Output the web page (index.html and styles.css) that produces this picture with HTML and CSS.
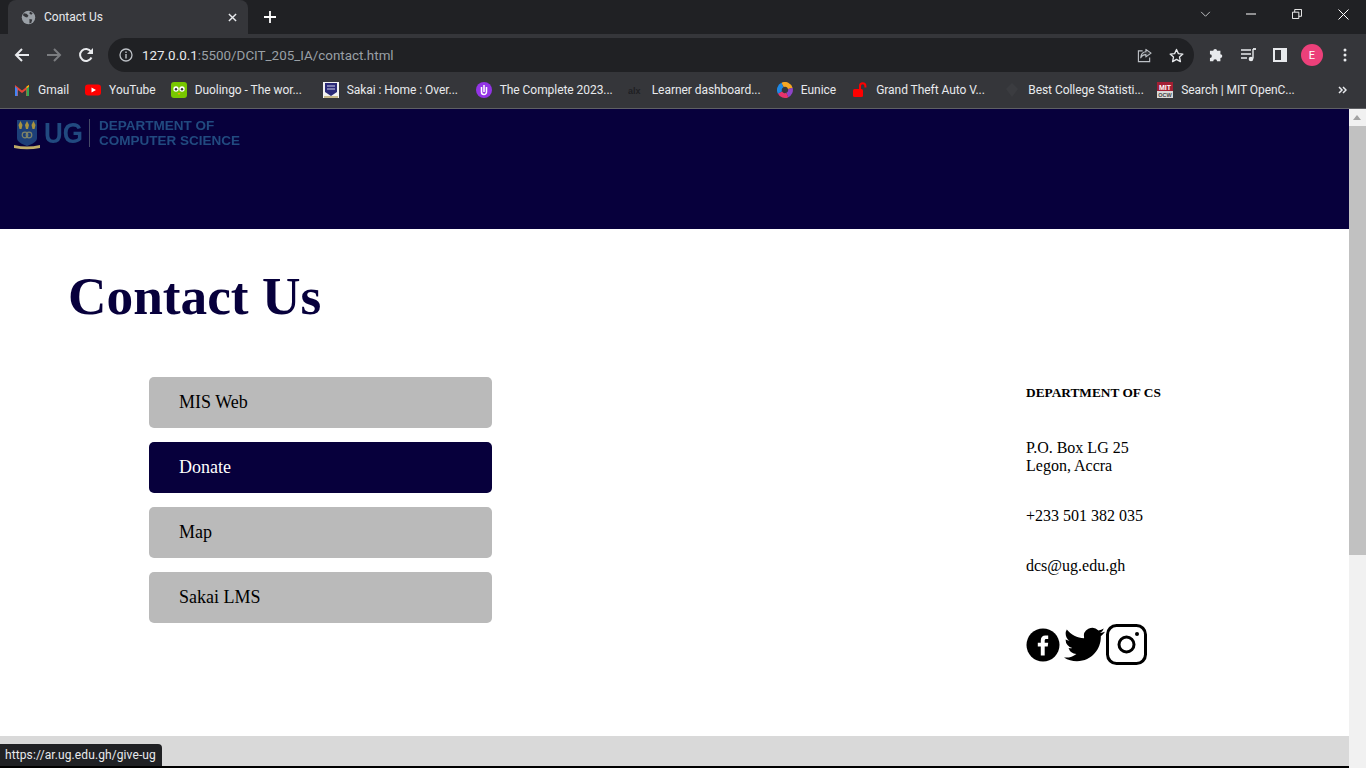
FILE: index.html
```html
<!DOCTYPE html>
<html lang="en">
<head>
    <meta charset="UTF-8">
    <title>Contact Us</title>
    <link rel="stylesheet" href="styles.css">
</head>
<body>
    <div class="browser">
        <div class="tabstrip">
            <div class="tab">
                <svg class="tab-globe" viewBox="0 0 16 16"><circle cx="8" cy="8" r="7.2" fill="#9aa0a6"/><path d="M3 3.500l3 .5 2 2-1.500 2-2-.5-2.500-2zM9 9.500l3 .5-1 3.500-2 1zM9.500 1.500l3 2-1.500 1.500-2-1z" fill="#35363a"/></svg>
                <span class="tab-title">Contact Us</span>
                <svg class="tab-close" viewBox="0 0 10 10"><path d="M1 1l8 8M9 1l-8 8" stroke="#e8eaed" stroke-width="1.600"/></svg>
            </div>
            <svg class="new-tab" viewBox="0 0 12 12"><path d="M6 0v12M0 6h12" stroke="#fff" stroke-width="1.800"/></svg>
            <div class="window-btns">
                <svg class="win-chevron" viewBox="0 0 12 8"><path d="M1 1l5 5 5-5" fill="none" stroke="#d0d3d6" stroke-width="1"/></svg>
                <svg class="win-min" viewBox="0 0 10 10"><path d="M0 5h10" stroke="#fff" stroke-width="1"/></svg>
                <svg class="win-max" viewBox="0 0 11 11"><path d="M.5 3.500h7v7h-7zM3 3.500V.5h7.500V8H7.500" fill="none" stroke="#fff" stroke-width="1"/></svg>
                <svg class="win-close" viewBox="0 0 11 11"><path d="M.5.5l10 10M10.500.5l-10 10" stroke="#fff" stroke-width="1"/></svg>
            </div>
        </div>

        <div class="toolbar">
            <svg class="nav-icon" viewBox="0 0 16 16"><path d="M15 8H2M8 2L2 8l6 6" fill="none" stroke="#e8eaed" stroke-width="2"/></svg>
            <svg class="nav-icon" viewBox="0 0 16 16"><path d="M1 8h13M8 2l6 6-6 6" fill="none" stroke="#7b7d80" stroke-width="2"/></svg>
            <svg class="nav-icon" viewBox="0 0 16 16"><path d="M13.500 10.500A6 6 0 1 1 13 4.500" fill="none" stroke="#e8eaed" stroke-width="2"/><path d="M15 1v6H9z" fill="#e8eaed"/></svg>
            <div class="omnibox">
                <svg class="info-icon" viewBox="0 0 14 14"><circle cx="7" cy="7" r="6" fill="none" stroke="#bdc1c6" stroke-width="1.300"/><path d="M7 6v4.500M7 3.500v1.500" stroke="#bdc1c6" stroke-width="1.400"/></svg>
                <span class="url"><b>127.0.0.1</b>:5500/DCIT_205_IA/contact.html</span>
                <svg class="omni-share" viewBox="0 0 16 16"><path d="M6 3H1.500v11.500h12V10" fill="none" stroke="#bdc1c6" stroke-width="1.200"/><path d="M9.500 1.500L15 5.500 9.500 9.500V7C7 7 5 8 4 10.500 4 6.500 6.500 4 9.500 4z" fill="#35363a" stroke="#bdc1c6" stroke-width="1.200" stroke-linejoin="round"/></svg>
                <svg class="omni-star" viewBox="0 0 16 16"><path d="M8 1.500l2 4.500 4.800.5-3.600 3.200 1 4.800L8 12.100 3.800 14.500l1-4.800L1.200 6.500 6 6z" fill="none" stroke="#e8eaed" stroke-width="1.400" stroke-linejoin="round"/></svg>
            </div>
            <div class="tool-icons">
                <svg class="tool-ext" viewBox="0 0 16 16"><path d="M1 5h3.500a2 2 0 1 1 4 0H12v3.500a2 2 0 1 1 0 4V16H8.500a2 2 0 1 0-4 0H1v-3.500a2 2 0 1 0 0-4z" fill="#e8eaed" transform="scale(.95) translate(0 -1)"/></svg>
                <svg class="tool-media" viewBox="0 0 16 14"><path d="M0 2h10M0 6h10M0 10h6" stroke="#e8eaed" stroke-width="1.400"/><path d="M12 1v9.500" stroke="#e8eaed" stroke-width="1.400"/><path d="M12 1h3" stroke="#e8eaed" stroke-width="1.800"/><circle cx="10" cy="11" r="2.300" fill="#e8eaed"/></svg>
                <svg class="tool-side" viewBox="0 0 14 14"><path d="M0 0h14v14H0z" fill="#e8eaed"/><path d="M2 2h6v10H2z" fill="#35363a"/></svg>
                <span class="avatar">E</span>
                <svg class="tool-menu" viewBox="0 0 4 14"><circle cx="2" cy="2" r="1.500" fill="#e8eaed"/><circle cx="2" cy="7" r="1.500" fill="#e8eaed"/><circle cx="2" cy="12" r="1.500" fill="#e8eaed"/></svg>
            </div>
        </div>

        <div class="bookmarks">
            <div class="bookmark">
                <svg viewBox="0 0 16 16"><path d="M1 14V3l7 5.500L15 3v11h-3V8L8 11 4 8v6z" fill="#ea4335"/><path d="M1 14V4.500L3.500 6.500V14z" fill="#4285f4"/><path d="M12.500 14V6.500L15 4.500V14z" fill="#34a853"/><path d="M12.500 6.500L15 4.500V3l-2.500 1.500z" fill="#fbbc04"/></svg>
                <span>Gmail</span>
            </div>
            <div class="bookmark">
                <svg viewBox="0 0 16 16"><rect y="2.500" width="16" height="11" rx="3" fill="#f00"/><path d="M6.500 5.500L11 8l-4.500 2.500z" fill="#fff"/></svg>
                <span>YouTube</span>
            </div>
            <div class="bookmark bm-pull">
                <svg viewBox="0 0 16 16"><rect width="16" height="16" rx="3" fill="#78c800"/><circle cx="5" cy="7" r="2.700" fill="#fff"/><circle cx="11" cy="7" r="2.700" fill="#fff"/><circle cx="5" cy="7.300" r="1.200" fill="#333"/><circle cx="11" cy="7.300" r="1.200" fill="#333"/><path d="M6.500 11h3l-1.500 2z" fill="#f5a800"/></svg>
                <span class="bm-long">Duolingo - The wor...</span>
            </div>
            <div class="bookmark">
                <svg viewBox="0 0 16 16"><rect width="16" height="16" fill="#f2f2f2"/><path d="M2 1h12v9l-6 4-6-4z" fill="#2b2a78"/><path d="M4 4h8M4 7h8" stroke="#cfcfe8" stroke-width="1.200"/><path d="M1 14h14v2H1z" fill="#c8b98a"/></svg>
                <span class="bm-long bm-113">Sakai : Home : Over...</span>
            </div>
            <div class="bookmark">
                <svg viewBox="0 0 16 16"><circle cx="8" cy="8" r="8" fill="#9334e6"/><path d="M5.500 5v5a2.500 2.500 0 0 0 5 0V5" fill="none" stroke="#fff" stroke-width="1.500"/><path d="M8 3v7" stroke="#fff" stroke-width="1.500"/></svg>
                <span class="bm-long">The Complete 2023...</span>
            </div>
            <div class="bookmark">
                <svg viewBox="0 0 16 16"><text class="alx" x="0" y="11.500">alx</text></svg>
                <span class="bm-long bm-109">Learner dashboard...</span>
            </div>
            <div class="bookmark">
                <svg viewBox="0 0 16 16"><g fill="none" stroke-width="4.800"><path d="M5.500 3a5.400 5.400 0 0 1 7.800 3.500" stroke="#f5a623"/><path d="M13.300 6.500a5.400 5.400 0 0 1-3 6.500" stroke="#8e44c8"/><path d="M10.300 13a5.400 5.400 0 0 1-7.300-2.500" stroke="#e8336d"/><path d="M3 10.500A5.400 5.400 0 0 1 5.500 3" stroke="#1e88e5"/></g></svg>
                <span>Eunice</span>
            </div>
            <div class="bookmark">
                <svg viewBox="0 0 16 16"><rect x="1" y="7" width="10" height="8" rx="1.500" fill="#f00"/><path d="M8 7V4a2.700 2.700 0 0 1 5.400 0v1.500" fill="none" stroke="#f00" stroke-width="2"/></svg>
                <span class="bm-long">Grand Theft Auto V...</span>
            </div>
            <div class="bookmark">
                <svg viewBox="0 0 16 16"><path d="M8 1l6 6-6 8-6-8z" fill="#3b3c40"/></svg>
                <span class="bm-long bm-113">Best College Statisti...</span>
            </div>
            <div class="bookmark">
                <svg viewBox="0 0 16 16"><rect width="16" height="9" fill="#a31f34"/><rect y="9" width="16" height="7" fill="#d9d9d9"/><text class="mit" x="8" y="7.500">MIT</text><text class="ocw" x="8" y="14.800">OCW</text></svg>
                <span class="bm-long">Search | MIT OpenC...</span>
            </div>
            <svg class="more" viewBox="0 0 9 8"><path d="M1 1l3 3-3 3M5 1l3 3-3 3" fill="none" stroke="#e8eaed" stroke-width="1.500"/></svg>
        </div>

        <div class="viewport">
            <div class="page">
                <header class="site-header">
                    <div class="logo">
                        <svg class="crest" viewBox="0 0 26 31"><path d="M3 1h20v18c0 4-5 6-10 8-5-2-10-4-10-8z" fill="#1c3f78"/><path d="M6.500 2l2 4-1 4h-2l-1-4zM13 2l2 4-1 4h-2l-1-4zM19.500 2l2 4-1 4h-2l-1-4z" fill="#a8933f"/><circle cx="11" cy="16" r="2.800" fill="none" stroke="#7f8468" stroke-width="1.200"/><circle cx="15" cy="16" r="2.800" fill="none" stroke="#7f8468" stroke-width="1.200"/><path d="M0 26q13 3 26 0v3q-13 2.500-26 0z" fill="#c0ad68"/></svg>
                        <span class="logo-ug">UG</span>
                        <span class="logo-bar"></span>
                        <span class="logo-dept">DEPARTMENT OF<br>COMPUTER SCIENCE</span>
                    </div>
                </header>
                <main class="contact">
                    <h1>Contact Us</h1>
                    <div class="contact-row">
                        <nav class="links">
                            <a href="#">MIS Web</a>
                            <a href="#" class="active">Donate</a>
                            <a href="#">Map</a>
                            <a href="#">Sakai LMS</a>
                        </nav>
                        <aside class="address">
                            <h4>DEPARTMENT OF CS</h4>
                            <p>P.O. Box LG 25<br>Legon, Accra</p>
                            <p>+233 501 382 035</p>
                            <p>dcs@ug.edu.gh</p>
                            <div class="social">
                                <svg class="fb" viewBox="0 0 34 34"><circle cx="17" cy="17" r="16.500"/><path d="M14.800 27.500V18.500h-3v-3.700h3v-2.600c0-3 1.800-4.700 4.500-4.700h2.900v3.500h-1.900c-1.200 0-1.600.7-1.600 1.700v2.100h3.500l-.5 3.700h-3v9z" fill="#fff"/></svg>
                                <svg class="tw" viewBox="0 0 24 24"><path d="M23.950 4.570a10 10 0 0 1-2.820.77 4.960 4.960 0 0 0 2.160-2.720c-.95.550-2 .950-3.130 1.180a4.920 4.920 0 0 0-8.380 4.480C7.690 8.090 4.060 6.130 1.640 3.160a4.820 4.820 0 0 0-.67 2.480c0 1.710.87 3.210 2.190 4.100a4.900 4.900 0 0 1-2.230-.62v.06a4.920 4.920 0 0 0 3.950 4.830 5 5 0 0 1-2.210.08 4.940 4.940 0 0 0 4.600 3.420A9.870 9.870 0 0 1 0 19.540a14 14 0 0 0 7.560 2.210c9.050 0 14-7.500 14-13.980 0-.21 0-.42-.02-.63a9.940 9.940 0 0 0 2.460-2.550z"/></svg>
                                <svg class="ig" viewBox="0 0 41 41"><rect x="1.500" y="1.500" width="38" height="38" rx="9" fill="none" stroke="#000" stroke-width="3"/><circle cx="20.500" cy="20.500" r="7.500" fill="none" stroke="#000" stroke-width="3"/><circle cx="31" cy="10" r="2"/></svg>
                            </div>
                        </aside>
                    </div>
                </main>
                <footer class="site-footer"></footer>
            </div>
            <div class="scrollbar">
                <span class="arrow-up"></span>
                <div class="thumb"></div>
            </div>
            <div class="status">https://ar.ug.edu.gh/give-ug</div>
        </div>
    </div>
</body>
</html>
```

FILE: styles.css
```css
*, *:before, *:after {box-sizing: border-box;}
* {margin: 0;padding: 0;}
html, body {height: 100%;overflow: hidden;}
body {background: #fff;color: #000;font-family: 'Liberation Serif', serif;}
svg {display: block;flex: none;}

.browser {display: flex;flex-direction: column;height: 768px;font-family: 'Roboto', 'Noto Sans', sans-serif;}

/* tab strip */
.tabstrip {display: flex;align-items: flex-end;height: 34px;background: #202124;padding-left: 8px;}
.tab {display: flex;align-items: center;width: 240px;height: 34px;padding: 0 10px 0 13px;background: #35363a;border-radius: 8px 8px 0 0;color: #e8eaed;font-size: 12px;}
.tab-globe {width: 15px;height: 15px;}
.tab-title {flex: 1;margin-left: 8px;}
.tab-close {width: 9px;height: 9px;margin-right: 1px;}
.new-tab {width: 12px;height: 12px;margin: 0 0 11px 16px;}
.window-btns {display: flex;align-items: center;gap: 36px;margin-left: auto;height: 34px;padding: 0 17px 6px 0;}
.win-chevron {width: 11px;height: 7px;}
.win-min {width: 10px;height: 10px;margin-left: -1px;}
.win-max {width: 10px;height: 10px;}
.win-close {width: 11px;height: 11px;}

/* toolbar */
.toolbar {display: flex;align-items: center;height: 40px;background: #35363a;padding: 2px 14px 0 14px;}
.nav-icon {width: 16px;height: 16px;margin-right: 16px;}
.omnibox {display: flex;align-items: center;width: 1086px;height: 34px;margin-left: -2px;padding: 0 10px 0 11px;background: #202124;border-radius: 17px;}
.info-icon {width: 14px;height: 14px;}
.url {flex: 1;margin-left: 9px;color: #9aa0a6;font-size: 13.400px;}
.url b {color: #e8eaed;font-weight: 400;}
.omni-share {width: 15px;height: 15px;margin-right: 17px;}
.omni-star {width: 15px;height: 15px;}
.tool-icons {display: flex;align-items: center;margin-left: 15px;}
.tool-ext {width: 16px;height: 16px;}
.tool-media {width: 16px;height: 14px;margin-left: 16px;}
.tool-side {width: 14px;height: 14px;margin-left: 16px;}
.avatar {display: flex;align-items: center;justify-content: center;width: 22px;height: 22px;margin-left: 14px;border-radius: 50%;background: #ec407a;color: #fff;font-size: 11px;}
.tool-menu {width: 4px;height: 14px;margin-left: 20px;}

/* bookmarks */
.bookmarks {display: flex;align-items: center;height: 35px;padding: 0 0 2px 14px;background: #35363a;border-bottom: 1px solid #5f6064;gap: 16px;color: #e8eaed;font-size: 12px;white-space: nowrap;}
.bookmark {display: flex;align-items: center;gap: 8px;}
.bookmark svg {width: 16px;height: 16px;}
.bm-pull {margin-left: -1px;}
.bm-long {display: block;width: 112px;letter-spacing: -.05px;}
.bm-113 {width: 113px;}
.bm-109 {width: 109px;}
.alx {fill: #1f2023;font: 700 9px 'Liberation Sans', sans-serif;}
.mit {fill: #fff;font: 700 7px 'Liberation Sans', sans-serif;text-anchor: middle;}
.ocw {fill: #444;font: 700 5.500px 'Liberation Sans', sans-serif;text-anchor: middle;}
.more {width: 9px;height: 8px;margin-left: 29px;}

/* page area */
.viewport {position: relative;display: flex;flex: 1;min-height: 0;}
.page {display: flex;flex-direction: column;flex: 1;min-width: 0;overflow: hidden;background: #fff;font-family: 'Liberation Serif', serif;}
.site-header {flex: none;height: 120px;padding: 10px 14px;background: #07003c;}
.logo {display: flex;align-items: center;height: 31px;filter: blur(.4px);}
.crest {width: 26px;height: 31px;}
.logo-ug {margin: -3px 0 0 4px;color: #214a80;font: 700 26px/29px 'Liberation Sans', sans-serif;transform: scaleY(1.1);}
.logo-bar {width: 1px;height: 28px;margin: -3px 0 0 6px;background: #454a68;}
.logo-dept {margin: -4px 0 0 9px;color: #214a80;font: 700 13.500px/15px 'Liberation Sans', sans-serif;}

.contact {flex: 1;min-height: 0;padding: 0 68px;}
h1 {margin-top: 39px;color: #07003c;font-size: 53.300px;line-height: 58px;}
.contact-row {display: flex;justify-content: space-between;margin-top: 51px;}
.links {display: flex;flex-direction: column;gap: 14px;width: 343px;margin-left: 81px;}
.links a {display: block;height: 51px;padding-left: 30px;background: #bababa;border-radius: 5px;color: #000;font-size: 18px;line-height: 50px;text-decoration: none;}
.links a.active {background: #07003c;color: #fff;}
.address {width: 255px;font-size: 16px;line-height: 18px;}
.address h4 {margin-top: 8px;font-size: 13.330px;line-height: 15px;}
.address p {margin-top: 32px;}
.address h4 + p {margin-top: 39px;}
.social {display: flex;align-items: center;gap: 4px;margin-top: 49px;}
.fb {width: 34px;height: 34px;}
.tw {width: 41px;height: 41px;}
.ig {width: 41px;height: 41px;margin-left: -3px;}

.site-footer {flex: none;height: 32px;background: #d9d9d9;border-bottom: 2px solid #000;}

.scrollbar {position: relative;flex: none;width: 17px;padding-top: 17px;background: #f1f1f1;}
.arrow-up {position: absolute;top: 6px;left: 4px;width: 0;height: 0;border-inline: 4.500px solid transparent;border-bottom: 5px solid #a3a3a3;}
.thumb {height: 429px;background: #c1c1c1;}

.status {position: absolute;left: 0;bottom: 2px;height: 22px;padding: 0 6px 0 5px;background: #202124;border-radius: 0 4px 0 0;color: #e8eaed;font-size: 12px;line-height: 22px;letter-spacing: .1px;}
```
